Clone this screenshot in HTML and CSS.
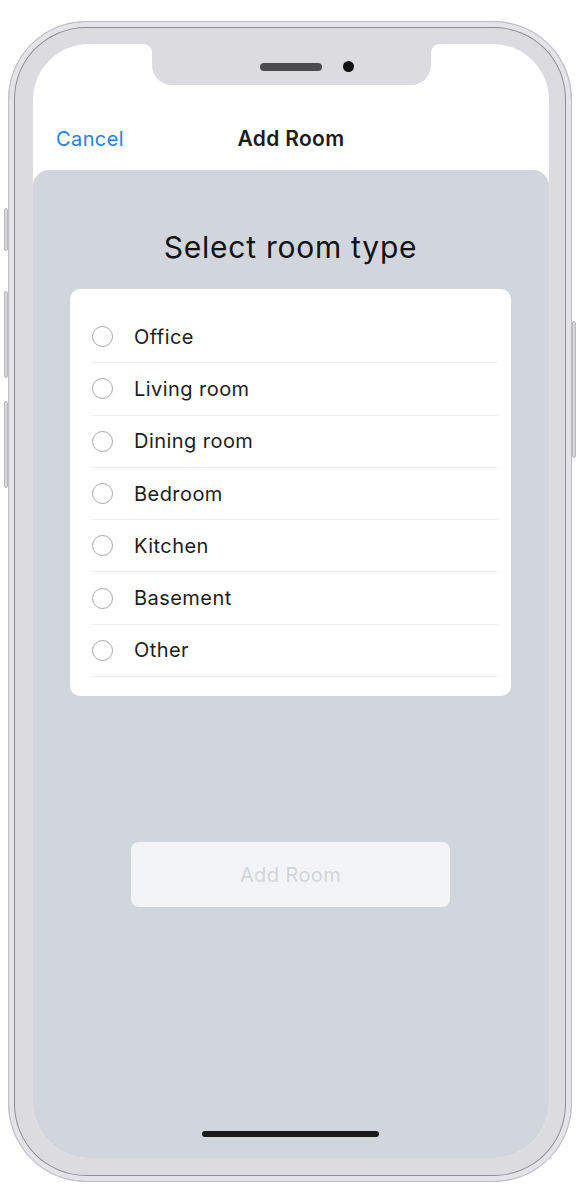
FILE: index.html
```html
<!DOCTYPE html>
<html lang="en">
<head>
<meta charset="utf-8">
<title>Add Room</title>
<link rel="stylesheet" href="styles.css">
</head>
<body>
<div class="phone">
  <span class="side-btn btn-mute"></span>
  <span class="side-btn btn-vol-up"></span>
  <span class="side-btn btn-vol-down"></span>
  <span class="side-btn btn-power"></span>
  <div class="screen">
    <div class="notch">
      <span class="speaker"></span>
      <span class="camera"></span>
    </div>
    <header class="navbar">
      <a class="nav-cancel">Cancel</a>
      <h1 class="nav-title">Add Room</h1>
      <span class="nav-spacer"></span>
    </header>
    <main class="sheet">
      <h2 class="sheet-title">Select room type</h2>
      <ul class="room-list">
        <li class="room-item"><span class="radio"></span><span class="room-label">Office</span></li>
        <li class="room-item"><span class="radio"></span><span class="room-label">Living room</span></li>
        <li class="room-item"><span class="radio"></span><span class="room-label">Dining room</span></li>
        <li class="room-item"><span class="radio"></span><span class="room-label">Bedroom</span></li>
        <li class="room-item"><span class="radio"></span><span class="room-label">Kitchen</span></li>
        <li class="room-item"><span class="radio"></span><span class="room-label">Basement</span></li>
        <li class="room-item"><span class="radio"></span><span class="room-label">Other</span></li>
      </ul>
      <button class="add-btn" disabled>Add Room</button>
    </main>
    <span class="home-indicator"></span>
  </div>
</div>
</body>
</html>
```
FILE: styles.css
```css
* { box-sizing: border-box; }
html, body { margin: 0; padding: 0; background: #ffffff; }
body {
  font-family: Inter, "Liberation Sans", sans-serif;
  color: #1c1c1e;
  width: 580px;
  height: 1201px;
  overflow: hidden;
}
.phone {
  position: relative;
  margin: 21px 8px 0 8px;
  width: 564px;
  height: 1161px;
  border-radius: 78px;
  background: #dcdce0;
  border: 1px solid #bdbdc2;
  box-shadow: inset 0 0 0 5px #e4e4e8, inset 0 0 0 6px #8e8e93;
  padding: 22px 22px 23px 24px;
}
.side-btn {
  position: absolute;
  width: 4px;
  background: #d8d8dc;
  border: 1px solid #b9b9be;
  border-radius: 2px;
}
.btn-mute { left: -5px; top: 186px; height: 43px; }
.btn-vol-up { left: -5px; top: 269px; height: 87px; }
.btn-vol-down { left: -5px; top: 379px; height: 87px; }
.btn-power { right: -5px; top: 299px; height: 137px; }
.screen {
  position: relative;
  width: 516px;
  height: 1114px;
  border-radius: 56px;
  background: #ffffff;
  overflow: hidden;
  display: flex;
  flex-direction: column;
}
.notch {
  position: absolute;
  top: 0;
  left: 119px;
  width: 279px;
  height: 41px;
  background: #dcdce0;
  border-radius: 0 0 20px 20px;
  display: flex;
  align-items: center;
  justify-content: center;
  gap: 21px;
  padding-top: 4px;
  padding-left: 30px;
}
.notch::before,
.notch::after {
  content: "";
  position: absolute;
  top: 0;
  width: 8px;
  height: 8px;
}
.notch::before {
  left: -8px;
  background: radial-gradient(circle at 0 100%, transparent 7.5px, #dcdce0 8px);
}
.notch::after {
  right: -8px;
  background: radial-gradient(circle at 100% 100%, transparent 7.5px, #dcdce0 8px);
}
.speaker {
  width: 62px;
  height: 8px;
  border-radius: 4px;
  background: #4c4c50;
}
.camera {
  width: 11px;
  height: 11px;
  border-radius: 50%;
  background: #111;
}
.navbar {
  display: grid;
  grid-template-columns: 1fr auto 1fr;
  align-items: center;
  height: 126px;
  padding: 80px 23px 16px 23px;
}
.nav-cancel {
  font-size: 20px;
  letter-spacing: 0.4px;
  color: #2580ea;
  line-height: 30px;
}
.nav-title {
  margin: 0;
  font-size: 21px;
  font-weight: 600;
  letter-spacing: 0.3px;
  line-height: 30px;
  color: #1c1c1e;
}
.sheet {
  flex: 1;
  background: #d1d5dc;
  border-radius: 16px 16px 0 0;
  padding: 59px 38px 0 37px;
  display: flex;
  flex-direction: column;
  align-items: center;
}
.sheet-title {
  margin: 0 0 24px 0;
  font-size: 30px;
  font-weight: 400;
  line-height: 36px;
  color: #111;
  letter-spacing: 0.75px;
}
.room-list {
  list-style: none;
  margin: 0;
  width: 441px;
  background: #ffffff;
  border-radius: 10px;
  padding: 22px 13px 19px 22px;
}
.room-item {
  display: flex;
  align-items: center;
  gap: 21px;
  height: 52.3px;
  border-bottom: 1.5px solid #eceef0;
}
.radio {
  width: 21px;
  height: 21px;
  border-radius: 50%;
  border: 1.5px solid #a3a7ae;
  flex: none;
}
.room-label {
  font-size: 20px;
  letter-spacing: 0.45px;
  color: #1c1c1e;
}
.add-btn {
  margin-top: 146px;
  width: 319px;
  height: 65px;
  border: none;
  border-radius: 8px;
  background: #f3f4f6;
  color: #d3d5da;
  font-family: Inter, "Liberation Sans", sans-serif;
  font-size: 20px;
  letter-spacing: 0.4px;
}
.home-indicator {
  position: absolute;
  left: 169px;
  bottom: 21px;
  width: 177px;
  height: 6px;
  border-radius: 3px;
  background: #1a1a1a;
}
```
